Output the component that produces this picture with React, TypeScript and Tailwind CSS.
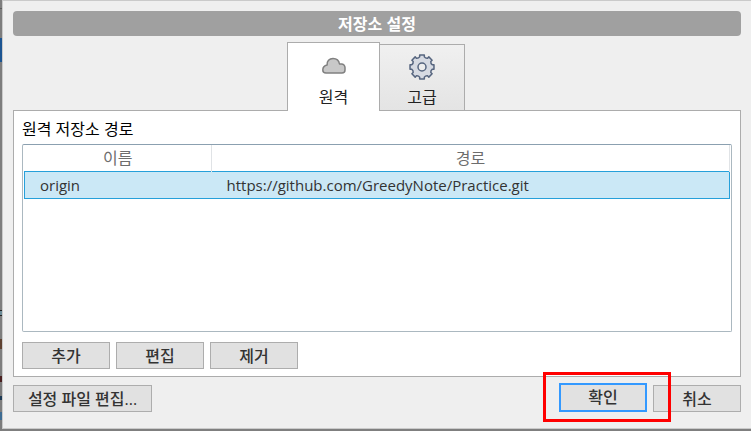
import React, { useState } from "react";

const remotes = [
  { name: "origin", path: "https://github.com/GreedyNote/Practice.git" },
];

function CloudIcon() {
  return (
    <svg width="24" height="18" viewBox="0 0 24 18" aria-hidden="true">
      <path
        d="M4 16h16a3 3 0 0 0 3-3v-2.500a3.500 3.500 0 0 0-3.500-3.500H17.500C17 3.800 14.500 1.500 11 1.500c-3.800 0-6.200 2.700-5.900 6.500C2.500 8.500.8 10.700.8 13c0 2 1.200 3 3.200 3z"
        fill="#c8c8c8"
        stroke="#808080"
        strokeWidth="1.500"
        strokeLinejoin="round"
      />
    </svg>
  );
}

function gearOutline() {
  let d = "";
  const at = (radius: number, degrees: number) => {
    const a = (degrees * Math.PI) / 180;
    return `${(13 + radius * Math.sin(a)).toFixed(2)} ${(13 - radius * Math.cos(a)).toFixed(2)}`;
  };
  for (let tooth = 0; tooth < 8; tooth++) {
    const c = tooth * 45;
    d += `${tooth === 0 ? "M" : "L"}${at(12.2, c - 11)}L${at(12.2, c + 11)}L${at(10.4, c + 13)}Q${at(9.3, c + 22.5)} ${at(10.4, c + 32)}`;
  }
  return `${d}Z`;
}

function GearIcon() {
  return (
    <svg width="26" height="26" viewBox="0 0 26 26" aria-hidden="true">
      <path d={gearOutline()} fill="#d6dae2" stroke="#56657f" strokeWidth="1.5" strokeLinejoin="round" />
      <circle cx="13" cy="13" r="4" fill="#ededed" stroke="#56657f" strokeWidth="1.500" />
    </svg>
  );
}

function Button({ children, wide = false, primary = false }: { children: React.ReactNode; wide?: boolean; primary?: boolean }) {
  return (
    <button
      type="button"
      className={`flex items-center justify-center bg-[#e1e1e1] text-base leading-6 font-medium whitespace-nowrap text-[#333] ${
        primary ? "h-[29px] border-2 border-[#3399ff] pb-0.5" : "h-[27px] border border-[#adadad]"
      } ${wide ? "w-[139px]" : "w-[88px]"}`}
    >
      {children}
    </button>
  );
}

function BackdropEdge() {
  return (
    <div className="flex w-0.5 shrink-0 flex-col bg-[#7d7d7d]" aria-hidden="true">
      <div className="mt-2 h-px bg-[#5c5c5c]" />
      <div className="mt-[29px] h-6 bg-[#1c5592]" />
      <div className="mt-[248px] h-1.5 border-y border-[#222] bg-[#6a8a96]" />
      <div className="mt-[23px] h-2.5 bg-[#5e4130]" />
      <div className="mt-[27px] h-1.5 bg-[#4a2020]" />
      <div className="mt-3.5 h-1 bg-[#1d3a55]" />
      <div className="mt-3 h-2 bg-[#3d6c93]" />
    </div>
  );
}

export default function App() {
  const [tab, setTab] = useState("remote");
  return (
    <div className="flex min-h-screen bg-[#7f7f7f] font-['Open_Sans','Noto_Sans_CJK_KR',sans-serif] text-base leading-6">
      <BackdropEdge />
      <main className="mb-0.5 flex min-w-0 flex-1 flex-col border-t border-b border-l border-[#cacaca] bg-[#efefef] pt-2.5 pr-2.5 pb-4 pl-2.5">
        <h1 className="flex h-[25px] shrink-0 items-center justify-center rounded bg-[#a0a0a0] text-base font-bold text-white">
          저장소 설정
        </h1>
        <div role="tablist" className="z-10 mt-1.5 -mb-px flex items-end justify-center pr-0.5">
          <button
            type="button"
            role="tab"
            aria-selected={tab === "remote"}
            onClick={() => setTab("remote")}
            className="flex h-[69px] w-[93px] flex-col items-center justify-between border border-b-0 border-[#acacac] bg-white pt-3.5 pb-0.5 text-[#222]"
          >
            <CloudIcon />
            원격
          </button>
          <button
            type="button"
            role="tab"
            aria-selected={tab === "advanced"}
            onClick={() => setTab("advanced")}
            className="flex h-[67px] w-[85px] flex-col items-center justify-between border border-l-0 border-[#acacac] bg-linear-to-b from-[#f0f0f0] to-[#e4e4e4] pt-[9px] pb-px text-[#222]"
          >
            <GearIcon />
            고급
          </button>
        </div>
        <section className="flex flex-1 flex-col border border-[#acacac] bg-white px-2 pt-1.5 pb-[7px]">
          <h2 className="text-base leading-6 text-black">원격 저장소 경로</h2>
          <div className="mt-[3px] flex-1 rounded-xs border border-[#abb8c0] border-t-[#8ba0b0] px-px">
            <table className="w-full table-fixed border-collapse">
              <thead>
                <tr className="h-[26px] text-[#6d6d6d]">
                  <th scope="col" className="w-[187px] border-r border-[#e0e3e6] p-0 font-normal">이름</th>
                  <th scope="col" className="border-r border-[#e0e3e6] p-0 font-normal">경로</th>
                </tr>
              </thead>
              <tbody>
                {remotes.map((remote) => (
                  <tr key={remote.name} className="h-[27px] border border-[#26a0da] bg-[#cbe8f6] text-[15px] text-[#333]">
                    <td className="py-0 pr-0 pl-[15px]">{remote.name}</td>
                    <td className="py-0 pr-0 pl-[15px]">{remote.path}</td>
                  </tr>
                ))}
              </tbody>
            </table>
          </div>
          <div className="mt-2.5 flex gap-1.5">
            <Button>추가</Button>
            <Button>편집</Button>
            <Button>제거</Button>
          </div>
        </section>
        <footer className="mt-1.5 flex items-end gap-1.5">
          <Button wide>설정 파일 편집...</Button>
          <div className="relative z-10 ml-auto">
            <Button primary>확인</Button>
            <div className="pointer-events-none absolute -top-[11px] -right-6 -bottom-2.5 -left-4 border-3 border-[#ff0000]" />
          </div>
          <Button>취소</Button>
        </footer>
      </main>
    </div>
  );
}
